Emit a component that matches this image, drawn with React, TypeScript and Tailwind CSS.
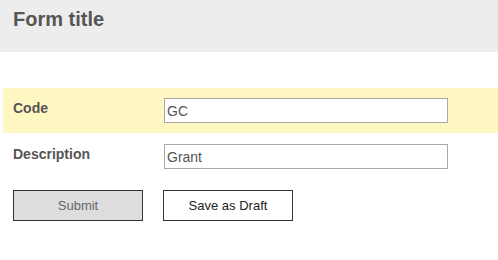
import React from 'react';

// Simple form with title bar, two fields and two actions
const Field = ({ label, value, highlight }: { label: string; value: string; highlight?: boolean }) => {
  return (
    <div
      className={`ml-[3px] flex items-start pl-[10px] ${
        highlight ? 'bg-[#fff7c1] pt-[10px] pb-[10px]' : 'pt-[11px]'
      }`}
    >
      <label className="w-[151px] pt-[2px] text-[14px] font-bold leading-[17px] text-[#555]">{label}</label>
      <input
        readOnly
        value={value}
        className="h-[25px] w-[284px] border border-[#a9a9a9] bg-white px-[2px] text-[14px] text-[#555] outline-none"
      />
    </div>
  );
};

export default function App() {
  return (
    <div className="h-[260px] w-[498px] bg-white font-['Liberation_Sans',Arial,sans-serif]">
      <div className="h-[52px] bg-[#ededed] px-[13px] pt-[8px]">
        <h1 className="text-[20px] font-bold leading-[23px] text-[#555]">Form title</h1>
      </div>

      <div className="mt-[36px]">
        <Field label="Code" value="GC" highlight />
        <Field label="Description" value="Grant" />
      </div>

      <div className="mt-[21px] flex gap-[20px] pl-[13px]">
        <button className="h-[31px] w-[130px] border border-[#333] bg-[#dddddd] text-[13px] text-[#666]">
          Submit
        </button>
        <button className="h-[31px] w-[130px] border border-[#333] bg-white text-[13px] text-[#222]">
          Save as Draft
        </button>
      </div>
    </div>
  );
}
